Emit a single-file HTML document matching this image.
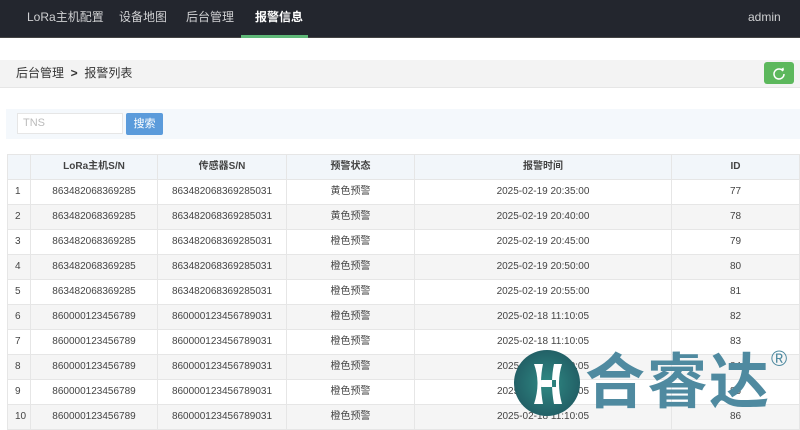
<!DOCTYPE html>
<html><head><meta charset="utf-8"><style>
*{margin:0;padding:0;box-sizing:border-box}
body{width:800px;height:420px;overflow:hidden;background:#fff;font-family:"Liberation Sans","Noto Sans CJK SC",sans-serif;font-size:12px;color:#333;position:relative}
.nav{height:38px;background:#23262e;position:relative;border-bottom:1px solid #444}
.nav span{position:absolute;top:9px;color:#cfd0d2;font-size:12px;line-height:16px}
.nav .act{color:#fff;font-weight:bold}
.nav .ul{position:absolute;left:241px;top:35px;width:67px;height:3px;background:#5fb878}
.bc{position:absolute;top:60px;left:0;width:800px;height:28px;background:#f3f3f3;border-bottom:1px solid #e6e6e6}
.bc span{position:absolute;left:16px;top:5px;font-size:12px;color:#333;line-height:16px}
.rf{position:absolute;left:764px;top:62px;width:30px;height:22px;background:#5cb85c;border-radius:3px}
.sr{position:absolute;top:109px;left:6px;width:794px;height:30px;background:#f4f8fc}
.inp{position:absolute;left:11px;top:4px;width:106px;height:21px;background:#fff;border:1px solid #e6e6e6;color:#bbb;padding:3px 5px;font-size:11px}
.btn{position:absolute;left:120px;top:4px;width:37px;height:22px;background:#5b9bdb;border-radius:2px;color:#fff;text-align:center;line-height:22px;font-size:11px}
table{position:absolute;top:154px;left:7px;border-collapse:collapse;width:793px;font-size:10px}
td,th{border:1px solid #e6e6e6;height:25px;text-align:center;color:#444;line-height:14px;padding:0}
th{background:#f2f6fa;font-weight:bold;height:25px}
td:first-child{text-align:left;padding-left:7px}
tr:nth-child(odd) td{background:#f5f5f5}
tr:nth-child(even) td{background:#fff}
.logo{position:absolute;left:514px;top:350px;width:66px;height:66px;border-radius:50%;background:radial-gradient(circle at 50% 50%,#2f8a84,#1d4f5a)}
.lt{position:absolute;left:585px;top:343px;font-size:60px;color:#4f8aa0;font-family:"Noto Sans CJK SC",sans-serif;font-weight:bold;line-height:70px;letter-spacing:2px}
.reg{position:absolute;left:771px;top:346px;font-size:22px;color:#4f8aa0}
</style></head><body>
<div class="nav">
<span style="left:27px">LoRa主机配置</span><span style="left:119px">设备地图</span><span style="left:186px">后台管理</span><span class="act" style="left:255px">报警信息</span><span style="left:748px">admin</span>
<div class="ul"></div></div>
<div class="bc"><span>后台管理 &nbsp;<b>&gt;</b>&nbsp; 报警列表</span></div>
<div class="rf"><svg width="30" height="22"><path d="M19 9 A5 5 0 1 0 20 12" fill="none" stroke="#fff" stroke-width="1.5"/><path d="M17 7 L20 8.5 L19.5 5.5Z" fill="#fff"/></svg></div>
<div class="sr"><div class="inp">TNS</div><div class="btn">搜索</div></div>
<table>
<tr><th style="width:23px"></th><th style="width:127px">LoRa主机S/N</th><th style="width:129px">传感器S/N</th><th style="width:128px">预警状态</th><th style="width:257px">报警时间</th><th>ID</th></tr>
<tr><td>1</td><td>863482068369285</td><td>863482068369285031</td><td>黄色预警</td><td>2025-02-19 20:35:00</td><td>77</td></tr>
<tr><td>2</td><td>863482068369285</td><td>863482068369285031</td><td>黄色预警</td><td>2025-02-19 20:40:00</td><td>78</td></tr>
<tr><td>3</td><td>863482068369285</td><td>863482068369285031</td><td>橙色预警</td><td>2025-02-19 20:45:00</td><td>79</td></tr>
<tr><td>4</td><td>863482068369285</td><td>863482068369285031</td><td>橙色预警</td><td>2025-02-19 20:50:00</td><td>80</td></tr>
<tr><td>5</td><td>863482068369285</td><td>863482068369285031</td><td>橙色预警</td><td>2025-02-19 20:55:00</td><td>81</td></tr>
<tr><td>6</td><td>860000123456789</td><td>860000123456789031</td><td>橙色预警</td><td>2025-02-18 11:10:05</td><td>82</td></tr>
<tr><td>7</td><td>860000123456789</td><td>860000123456789031</td><td>橙色预警</td><td>2025-02-18 11:10:05</td><td>83</td></tr>
<tr><td>8</td><td>860000123456789</td><td>860000123456789031</td><td>橙色预警</td><td>2025-02-18 11:10:05</td><td>84</td></tr>
<tr><td>9</td><td>860000123456789</td><td>860000123456789031</td><td>橙色预警</td><td>2025-02-18 11:10:05</td><td>85</td></tr>
<tr><td>10</td><td>860000123456789</td><td>860000123456789031</td><td>橙色预警</td><td>2025-02-18 11:10:05</td><td>86</td></tr>
</table>
<div class="logo"><svg width="66" height="66"><path d="M20 14 Q27 33 20 54 L29 54 Q25 33 29 14Z M40 14 Q36 33 40 54 L48 54 Q42 33 48 14Z M27 30 H42 V37 H27Z" fill="#fff"/></svg></div>
<div class="lt">合睿达</div>
<div class="reg">®</div>
</body></html>
